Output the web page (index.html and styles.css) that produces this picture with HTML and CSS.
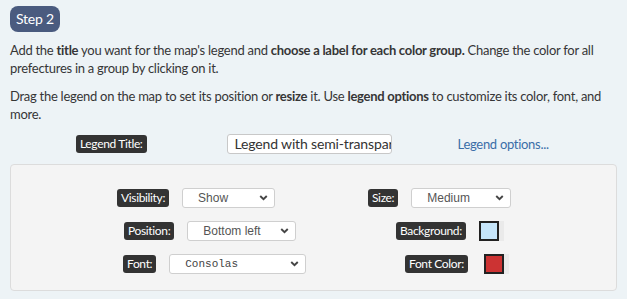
FILE: index.html
```html
<!DOCTYPE html>
<html>
<head>
<meta charset="utf-8">
<link rel="stylesheet" href="styles.css">
</head>
<body>
<div class="page">
  <div class="step">Step 2</div>
  <p class="text">Add the <b>title</b> you want for the map's legend and <b>choose a label for each color group.</b> Change the color for all prefectures in a group by clicking on it.</p>
  <p class="text">Drag the legend on the map to set its position or <b>resize</b> it. Use <b>legend options</b> to customize its color, font, and more.</p>
  <div class="title-row">
    <span class="tag">Legend Title:</span>
    <div class="input"><span>Legend with semi-transparent background</span></div>
    <a class="link">Legend options...</a>
  </div>
  <div class="panel">
    <div class="row">
      <div class="cell c1"><span class="tag">Visibility:</span><div class="select w-vis"><span>Show</span><svg class="chev" viewBox="0 0 10 7" width="9" height="6"><path d="M1.2 1.2 L5 5 L8.8 1.2" fill="none" stroke="#444" stroke-width="2.2"/></svg></div></div>
      <div class="cell c2"><span class="tag">Size:</span><div class="select w-size"><span>Medium</span><svg class="chev" viewBox="0 0 10 7" width="9" height="6"><path d="M1.2 1.2 L5 5 L8.8 1.2" fill="none" stroke="#444" stroke-width="2.2"/></svg></div></div>
    </div>
    <div class="row">
      <div class="cell c3"><span class="tag">Position:</span><div class="select w-pos"><span>Bottom left</span><svg class="chev" viewBox="0 0 10 7" width="9" height="6"><path d="M1.2 1.2 L5 5 L8.8 1.2" fill="none" stroke="#444" stroke-width="2.2"/></svg></div></div>
      <div class="cell c4"><span class="tag">Background:</span><div class="swatch-wrap"><div class="swatch bg"></div></div></div>
    </div>
    <div class="row">
      <div class="cell c5"><span class="tag">Font:</span><div class="select w-font mono"><span>Consolas</span><svg class="chev" viewBox="0 0 10 7" width="9" height="6"><path d="M1.2 1.2 L5 5 L8.8 1.2" fill="none" stroke="#444" stroke-width="2.2"/></svg></div></div>
      <div class="cell c6"><span class="tag">Font Color:</span><div class="swatch-wrap"><div class="swatch red"></div></div></div>
    </div>
  </div>
</div>
</body>
</html>
```

FILE: styles.css
```css
html, body {
  margin: 0;
  padding: 0;
  background: #edf3f6;
}
body {
  font-family: Lato, "Liberation Sans", sans-serif;
  color: #363636;
  width: 627px;
  height: 299px;
  overflow: hidden;
}
.page {
  padding: 6px 10px 0 10px;
}
.step {
  display: inline-block;
  background: #4a5b7f;
  color: #fff;
  font-size: 14px;
  letter-spacing: -0.2px;
  line-height: 26px;
  height: 26px;
  padding: 0 6px;
  border-radius: 8px;
}
.text {
  margin: 9px 0 0 0;
  font-size: 13px;
  letter-spacing: -0.27px;
  line-height: 18px;
}
.text + .text {
  margin-top: 10px;
}
.title-row {
  display: flex;
  align-items: center;
  margin-top: 11px;
  height: 20px;
  padding-left: 66px;
}
.tag {
  display: inline-block;
  background: #333;
  color: #fff;
  font-size: 12px;
  line-height: 18px;
  height: 18px;
  padding: 0 4px;
  border-radius: 3px;
  white-space: nowrap;
  letter-spacing: -0.35px;
}
.input {
  margin-left: 80px;
  width: 156px;
  height: 18px;
  border: 1px solid #c8c8c8;
  border-radius: 3px;
  background: #fff;
  padding: 0 0 0 7px;
  overflow: hidden;
  white-space: nowrap;
  font-size: 14px;
  letter-spacing: -0.15px;
  line-height: 18px;
  color: #333;
}
.link {
  margin-left: 66px;
  color: #3b6ea8;
  font-size: 13px;
  letter-spacing: -0.3px;
}
.panel {
  margin-top: 10px;
  width: 607px;
  height: 127px;
  background: #f4f4f4;
  border: 1px solid #dcdcdc;
  border-radius: 4px;
  box-sizing: border-box;
  padding-top: 23px;
}
.row {
  display: flex;
  height: 20px;
  margin-bottom: 13px;
}
.cell {
  display: flex;
  align-items: center;
  box-sizing: border-box;
}
.cell .tag { margin-right: 13px; }
.c1, .c3, .c5 { width: 357px; }
.c1 { padding-left: 106px; }
.c3 { padding-left: 113px; }
.c5 { padding-left: 112px; }
.c4 { padding-left: 28px; }
.c6 { padding-left: 37px; }
.c4 .tag { margin-right: 13px; }
.c6 .tag { margin-right: 16px; }
.select {
  position: relative;
  height: 18px;
  border: 1px solid #cfcfcf;
  border-radius: 3px;
  background: #fff;
  font-family: "Liberation Sans", Arial, sans-serif;
  font-size: 12px;
  line-height: 18px;
  color: #555;
  padding-left: 15px;
}
.chev {
  position: absolute;
  right: 6px;
  top: 6px;
}
.w-vis { width: 76px; }
.w-size { width: 83px; }
.w-pos { width: 92px; }
.w-font { width: 120px; }
.mono { font-family: "Liberation Mono", "DejaVu Sans Mono", monospace; font-size: 11px; color: #444; }
.swatch-wrap {
  width: 25px;
  height: 20px;
  background: #eaeaea;
}
.swatch {
  width: 16px;
  height: 16px;
  border: 2px solid #222;
}
.swatch.bg { background: #c6e6fb; }
.swatch.red { background: #cc3333; }
```
